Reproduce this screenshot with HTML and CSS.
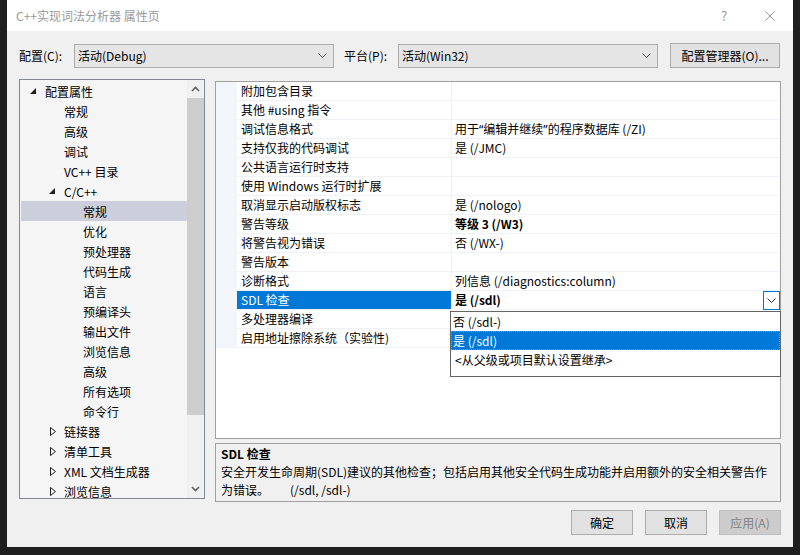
FILE: index.html
```html
<!DOCTYPE html>
<html lang="zh-CN">
  <head>
    <meta charset="UTF-8" />
    <title>C++实现词法分析器 属性页</title>
    <link rel="stylesheet" href="styles.css">
  </head>
  <body>
    <div class="dialog">
      <div class="titleBar">
        <span class="titleText">C++实现词法分析器 属性页</span>
        <span class="titleBtn">?</span>
        <span class="titleBtn">
          <svg width="10" height="10" viewBox="0 0 10 10"><path d="M0.5 0.5 L9.5 9.5 M9.5 0.5 L0.5 9.5" stroke="#999" stroke-width="1" fill="none"/></svg>
        </span>
      </div>

      <div class="content">
        <div class="configRow">
          <span class="label">配置(C):</span>
          <div class="combo">
            <span>活动(Debug)</span>
            <svg class="comboArrow" width="9" height="5" viewBox="0 0 9 5"><polyline points="0.5,0.5 4.5,4.5 8.5,0.5" stroke="#555" fill="none"/></svg>
          </div>
          <span class="label platformLabel">平台(P):</span>
          <div class="combo">
            <span>活动(Win32)</span>
            <svg class="comboArrow" width="9" height="5" viewBox="0 0 9 5"><polyline points="0.5,0.5 4.5,4.5 8.5,0.5" stroke="#555" fill="none"/></svg>
          </div>
          <button class="btn managerBtn">配置管理器(O)...</button>
        </div>

        <div class="mainArea">
          <div class="tree">
            <div class="treeList">
              <div class="treeItem lvl0"><span class="arrow"><svg width="6" height="6" viewBox="0 0 6 6"><polygon points="6,0 6,6 0,6" fill="#1e1e1e"/></svg></span>配置属性</div>
              <div class="treeItem lvl1"><span class="arrow"></span>常规</div>
              <div class="treeItem lvl1"><span class="arrow"></span>高级</div>
              <div class="treeItem lvl1"><span class="arrow"></span>调试</div>
              <div class="treeItem lvl1"><span class="arrow"></span>VC++ 目录</div>
              <div class="treeItem lvl1"><span class="arrow"><svg width="6" height="6" viewBox="0 0 6 6"><polygon points="6,0 6,6 0,6" fill="#1e1e1e"/></svg></span>C/C++</div>
              <div class="treeItem lvl2 selected"><span class="arrow"></span>常规</div>
              <div class="treeItem lvl2"><span class="arrow"></span>优化</div>
              <div class="treeItem lvl2"><span class="arrow"></span>预处理器</div>
              <div class="treeItem lvl2"><span class="arrow"></span>代码生成</div>
              <div class="treeItem lvl2"><span class="arrow"></span>语言</div>
              <div class="treeItem lvl2"><span class="arrow"></span>预编译头</div>
              <div class="treeItem lvl2"><span class="arrow"></span>输出文件</div>
              <div class="treeItem lvl2"><span class="arrow"></span>浏览信息</div>
              <div class="treeItem lvl2"><span class="arrow"></span>高级</div>
              <div class="treeItem lvl2"><span class="arrow"></span>所有选项</div>
              <div class="treeItem lvl2"><span class="arrow"></span>命令行</div>
              <div class="treeItem lvl1"><span class="arrow closed"><svg width="6" height="9" viewBox="0 0 6 9"><polygon points="0.5,0.5 5.5,4.5 0.5,8.5" stroke="#1e1e1e" fill="none"/></svg></span>链接器</div>
              <div class="treeItem lvl1"><span class="arrow closed"><svg width="6" height="9" viewBox="0 0 6 9"><polygon points="0.5,0.5 5.5,4.5 0.5,8.5" stroke="#1e1e1e" fill="none"/></svg></span>清单工具</div>
              <div class="treeItem lvl1"><span class="arrow closed"><svg width="6" height="9" viewBox="0 0 6 9"><polygon points="0.5,0.5 5.5,4.5 0.5,8.5" stroke="#1e1e1e" fill="none"/></svg></span>XML 文档生成器</div>
              <div class="treeItem lvl1"><span class="arrow closed"><svg width="6" height="9" viewBox="0 0 6 9"><polygon points="0.5,0.5 5.5,4.5 0.5,8.5" stroke="#1e1e1e" fill="none"/></svg></span>浏览信息</div>
            </div>
            <div class="scrollbar">
              <div class="scrollBtn"><svg width="9" height="6" viewBox="0 0 9 6"><polyline points="1,5 4.5,1.5 8,5" stroke="#606060" stroke-width="1.6" fill="none"/></svg></div>
              <div class="thumb"></div>
              <div class="track"></div>
              <div class="scrollBtn"><svg width="9" height="6" viewBox="0 0 9 6"><polyline points="1,1 4.5,4.5 8,1" stroke="#606060" stroke-width="1.6" fill="none"/></svg></div>
            </div>
          </div>

          <div class="rightCol">
            <div class="grid">
              <div class="propRow"><div class="strip"></div><div class="name">附加包含目录</div><div class="value"></div></div>
              <div class="propRow"><div class="strip"></div><div class="name">其他 #using 指令</div><div class="value"></div></div>
              <div class="propRow"><div class="strip"></div><div class="name">调试信息格式</div><div class="value">用于<span class="quote">“</span>编辑并继续<span class="quote">”</span>的程序数据库 (/ZI)</div></div>
              <div class="propRow"><div class="strip"></div><div class="name">支持仅我的代码调试</div><div class="value">是 (/JMC)</div></div>
              <div class="propRow"><div class="strip"></div><div class="name">公共语言运行时支持</div><div class="value"></div></div>
              <div class="propRow"><div class="strip"></div><div class="name">使用 Windows 运行时扩展</div><div class="value"></div></div>
              <div class="propRow"><div class="strip"></div><div class="name">取消显示启动版权标志</div><div class="value">是 (/nologo)</div></div>
              <div class="propRow"><div class="strip"></div><div class="name">警告等级</div><div class="value bold">等级 3 (/W3)</div></div>
              <div class="propRow"><div class="strip"></div><div class="name">将警告视为错误</div><div class="value">否 (/WX-)</div></div>
              <div class="propRow"><div class="strip"></div><div class="name">警告版本</div><div class="value"></div></div>
              <div class="propRow"><div class="strip"></div><div class="name">诊断格式</div><div class="value">列信息 (/diagnostics:column)</div></div>
              <div class="propRow"><div class="strip"></div><div class="name active">SDL 检查</div>
                <div class="value bold editing">是 (/sdl)
                  <span class="dropBtn"><svg width="9" height="5" viewBox="0 0 9 5"><polyline points="0.5,0.5 4.5,4.5 8.5,0.5" stroke="#333" fill="none"/></svg></span>
                </div>
              </div>
              <div class="propRow"><div class="strip"></div><div class="name">多处理器编译</div><div class="value"></div></div>
              <div class="propRow"><div class="strip"></div><div class="name">启用地址擦除系统（实验性)</div><div class="value"></div></div>

              <div class="dropList">
                <div class="dropItem">否 (/sdl-)</div>
                <div class="dropItem current">是 (/sdl)</div>
                <div class="dropItem inherit">&lt;从父级或项目默认设置继承&gt;</div>
              </div>
            </div>

            <div class="desc">
              <div class="descTitle">SDL 检查</div>
              <div>安全开发生命周期(SDL)建议的其他检查；包括启用其他安全代码生成功能并启用额外的安全相关警告作<br>为错误。<span class="switches">(/sdl, /sdl-)</span></div>
            </div>
          </div>
        </div>

        <div class="buttonRow">
          <button class="btn">确定</button>
          <button class="btn">取消</button>
          <button class="btn disabled">应用(A)</button>
        </div>
      </div>
    </div>
  </body>
</html>
```

FILE: styles.css
```css
* {
  box-sizing: border-box;
}

html,
body {
  margin: 0;
  height: 100%;
}

body {
  background: #1f1f1f;
  font-family: "Noto Sans CJK SC", "Noto Sans", sans-serif;
  font-size: 12px;
  color: #000;
  overflow: hidden;
}

.dialog {
  margin-left: 7px;
  width: 786px;
  height: 547px;
  background: #f0f0f0;
  display: flex;
  flex-direction: column;
}

.titleBar {
  height: 31px;
  background: #fff;
  display: flex;
  align-items: center;
  padding-left: 9px;
  color: #999;
}

.titleText {
  flex: 1;
}

.titleBtn {
  width: 46px;
  height: 31px;
  display: flex;
  align-items: center;
  justify-content: center;
  font-size: 13px;
}

.content {
  flex: 1;
  padding: 12px 12px 12px 12px;
  display: flex;
  flex-direction: column;
}

/* top row: configuration / platform */
.configRow {
  height: 25px;
  display: flex;
  align-items: center;
}

.label {
  width: 55px;
}

.platformLabel {
  margin-left: 10px;
  width: 54px;
}

.combo {
  width: 260px;
  height: 24px;
  border: 1px solid #acacac;
  background: #e5e5e5;
  display: flex;
  align-items: center;
  padding-left: 3px;
}

.comboArrow {
  margin-left: auto;
  margin-right: 6px;
}

.btn {
  width: 62px;
  height: 25px;
  border: 1px solid #adadad;
  background: #e1e1e1;
  font-family: inherit;
  font-size: 12px;
  color: #000;
  padding: 0;
}

.managerBtn {
  margin-left: 12px;
  width: 110px;
}

.btn.disabled {
  background: #cccccc;
  border-color: #bfbfbf;
  color: #838383;
}

.mainArea {
  margin-top: 11px;
  display: flex;
  gap: 10px;
}

/* left tree */
.tree {
  width: 186px;
  height: 420px;
  border: 1px solid #828790;
  background: #f5f5f5;
  display: flex;
}

.treeList {
  flex: 1;
  padding: 1px 0 0 1px;
  overflow: hidden;
}

.treeItem {
  height: 20px;
  display: flex;
  align-items: center;
  white-space: nowrap;
}

.treeItem.selected {
  background: #cccedb;
}

.lvl0 {
  padding-left: 7px;
}

.lvl1 {
  padding-left: 26px;
}

.lvl2 {
  padding-left: 45px;
}

.arrow {
  width: 17px;
  display: flex;
  align-items: center;
  padding-left: 2px;
}

.arrow.closed {
  padding-left: 3px;
}

.scrollbar {
  width: 17px;
  display: flex;
  flex-direction: column;
  background: #f0f0f0;
}

.scrollBtn {
  height: 18px;
  display: flex;
  align-items: center;
  justify-content: center;
}

.thumb {
  height: 317px;
  background: #cdcdcd;
}

.track {
  flex: 1;
}

/* property grid */
.rightCol {
  width: 566px;
  display: flex;
  flex-direction: column;
}

.grid {
  margin-top: 2px;
  height: 358px;
  border: 1px solid #a0a0a0;
  background: #fff;
  position: relative;
}

.propRow {
  display: grid;
  grid-template-columns: 21px 215px 1fr;
  height: 19px;
}

.strip {
  background: #f2f5fa;
}

.name,
.value {
  border-bottom: 1px solid #eef1f6;
  line-height: 18px;
  padding-left: 4px;
  white-space: nowrap;
  overflow: hidden;
}

.name {
  border-right: 1px solid #eef1f6;
}

.name.active {
  background: #0078d7;
  color: #fff;
}

.value {
  padding-left: 3px;
}

.quote {
  font-family: "Noto Sans", sans-serif;
}

.bold {
  font-weight: bold;
}

.value.editing {
  position: relative;
  overflow: visible;
}

.dropBtn {
  position: absolute;
  top: 0;
  right: 0;
  width: 17px;
  height: 19px;
  border: 1px solid #0078d7;
  background: #fff;
  display: flex;
  align-items: center;
  justify-content: center;
}

.dropList {
  position: absolute;
  top: 229px;
  left: 234px;
  width: 331px;
  height: 66px;
  border: 1px solid #646464;
  background: #fff;
}

.dropItem {
  height: 19px;
  line-height: 19px;
  padding-left: 2px;
}

.dropItem.current {
  background: #0078d7;
  color: #fff;
  outline: 1px dotted #d98a1a;
  outline-offset: -1px;
}

.dropItem.inherit {
  padding-left: 4px;
}

/* description box */
.desc {
  margin-top: 4px;
  height: 59px;
  border: 1px solid #a0a0a0;
  padding: 1px 5px;
  line-height: 18px;
}

.descTitle {
  font-weight: bold;
}

.switches {
  margin-left: 21px;
}

.buttonRow {
  margin-top: 8px;
  display: flex;
  justify-content: flex-end;
  gap: 12px;
}
```
